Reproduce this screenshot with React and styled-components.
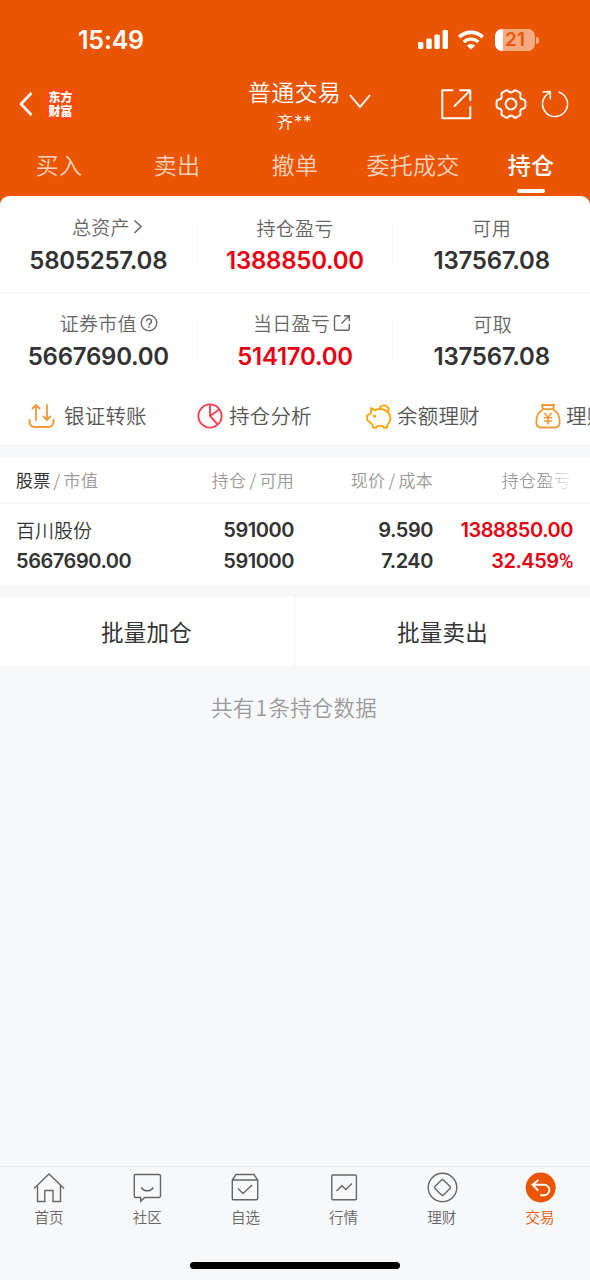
import React from "react";
import styled, { createGlobalStyle } from "styled-components";

const ORANGE = "#ea5504";
const RED = "#e60012";

const summary = [
  [
    { label: "总资产", value: "5805257.08", icon: "chevron", shift: 18 },
    { label: "持仓盈亏", value: "1388850.00", red: true },
    { label: "可用", value: "137567.08" },
  ],
  [
    { label: "证券市值", value: "5667690.00", icon: "help", shift: 21 },
    { label: "当日盈亏", value: "514170.00", icon: "share", red: true, shift: 14 },
    { label: "可取", value: "137567.08", shift: 2 },
  ],
];

const menus = ["买入", "卖出", "撤单", "委托成交", "持仓"];

function SignalIcon() {
  return (
    <svg width="31" height="20" viewBox="0 0 31 20" fill="#fff">
      <rect x="0" y="12" width="5.4" height="7" rx="1.4" />
      <rect x="8.3" y="8.6" width="5.4" height="10.4" rx="1.4" />
      <rect x="16.4" y="4.4" width="5.4" height="14.6" rx="1.4" />
      <rect x="24.6" y="0" width="5.4" height="19" rx="1.4" />
    </svg>
  );
}

function WifiIcon() {
  return (
    <svg width="26" height="20" viewBox="0 0 26 20" fill="none" stroke="#fff" strokeWidth="3.8">
      <path d="M1.300 7.200a16.800 16.800 0 0 1 23.400 0" />
      <path d="M5.700 12a10.600 10.600 0 0 1 14.600 0" strokeWidth="3.400" />
      <path d="M13 19.600l-4.100-3.900a5.800 5.800 0 0 1 8.200 0z" fill="#fff" stroke="none" />
    </svg>
  );
}

function LabelIcon({ type }) {
  if (type === "chevron") {
    return (
      <svg width="10" height="18" viewBox="0 0 10 18" fill="none" stroke="#666" strokeWidth="1.5">
        <path d="M1.500 2.500l6.500 6-6.500 6.500" />
      </svg>
    );
  }
  if (type === "help") {
    return (
      <svg width="18" height="18" viewBox="0 0 18 18" fill="none" stroke="#666" strokeWidth="1.3">
        <circle cx="9" cy="9" r="7.8" />
        <path d="M6.600 7.300a2.400 2.400 0 1 1 3.700 2C9.400 9.900 9 10.300 9 11.200" strokeWidth="1.500" />
        <path d="M9 12.300v1.500" strokeWidth="1.600" />
      </svg>
    );
  }
  return (
    <svg width="18" height="18" viewBox="0 0 18 18" fill="none" stroke="#666" strokeWidth="1.4">
      <path d="M7.500 1.800H3a1.500 1.500 0 0 0-1.500 1.500v11.500a1.500 1.500 0 0 0 1.500 1.500h11.800a1.500 1.500 0 0 0 1.500-1.500V10" />
      <path d="M8.500 9.600L16 2M11 1.700h5.300V7" />
    </svg>
  );
}

function Header() {
  return (
    <StHeader>
      <StStatus>
        <StTime>15:49</StTime>
        <StStatusIcons>
          <SignalIcon />
          <WifiIcon />
          <StBattery>
            <StBatteryBody>21</StBatteryBody>
            <StBatteryTip />
          </StBattery>
        </StStatusIcons>
      </StStatus>
      <StNav>
        <StNavLeft>
          <svg width="14" height="24" viewBox="0 0 14 24" fill="none" stroke="#fff" strokeWidth="2.6">
            <path d="M12.500 1L2 12l10.500 11" strokeLinejoin="round" />
          </svg>
          <StLogo>
            <span>东方</span>
            <span>财富</span>
          </StLogo>
        </StNavLeft>
        <StAccount>
          <StAccountTitle>普通交易</StAccountTitle>
          <StAccountName>
            齐<span>**</span>
          </StAccountName>
        </StAccount>
        <StArrow width="22" height="15" viewBox="0 0 22 15">
          <path d="M1 1l10 12L21 1" />
        </StArrow>
        <StNavRight>
          <svg width="32" height="32" viewBox="0 0 32 32" fill="none" stroke="#fff" strokeWidth="1.900">
            <path d="M12.500 2.300H2.300v28h28V19" strokeLinejoin="round" strokeLinecap="round" />
            <path d="M14.500 18L30 2.600M20 2.300h10.300v10" strokeLinejoin="round" strokeLinecap="round" />
          </svg>
          <svg width="32" height="32" viewBox="0 0 32 32" fill="none" stroke="#fff" strokeWidth="2">
            <path
              d="M10.800 2.600Q12 1.700 13.100 3Q16 5.800 18.900 3Q20 1.700 21.200 2.600L24.800 4.600Q26 5.400 25.400 6.900Q24.500 10.700 28.200 11.600Q30.300 12 30.400 13.600V18.400Q30.300 20 28.200 20.400Q24.500 21.300 25.400 25.100Q26 26.600 24.800 27.400L21.200 29.400Q20 30.300 18.900 29Q16 26.200 13.100 29Q12 30.300 10.800 29.400L7.200 27.400Q6 26.600 6.600 25.100Q7.500 21.300 3.800 20.400Q1.700 20 1.600 18.400V13.600Q1.700 12 3.800 11.600Q7.500 10.700 6.600 6.900Q6 5.400 7.200 4.600Z"
              strokeLinejoin="round"
            />
            <circle cx="16" cy="16" r="5.400" />
          </svg>
          <svg width="28" height="28" viewBox="0 0 28 28" fill="none" stroke="#fff" strokeWidth="1.500">
            <path d="M17.500 2A12.500 12.500 0 1 1 8.500 2.800" />
            <path d="M1.500 2L9.300 1.500V9.500" />
          </svg>
        </StNavRight>
      </StNav>
      <StMenus>
        {menus.map((menu) => (
          <StMenu key={menu} $active={menu === "持仓"}>
            {menu}
          </StMenu>
        ))}
      </StMenus>
    </StHeader>
  );
}

function Summary() {
  return (
    <StSummary>
      {summary.map((row, i) => (
        <StSummaryRow key={i} $line={i === 0}>
          {row.map((item) => (
            <StSummaryCell key={item.label}>
              <StLabel $shift={item.shift} $low={!item.icon}>
                {item.label}
                {item.icon && <LabelIcon type={item.icon} />}
              </StLabel>
              <StValue $red={item.red}>{item.value}</StValue>
            </StSummaryCell>
          ))}
        </StSummaryRow>
      ))}
    </StSummary>
  );
}

function QuickLinks() {
  return (
    <StLinks>
      <StLink $gap={9}>
        <svg width="27" height="26" viewBox="0 0 27 26" fill="none" stroke="#f09a37" strokeWidth="2" strokeLinecap="round" strokeLinejoin="round">
          <path d="M1.500 17v2a5 5 0 0 0 5 5h14a5 5 0 0 0 5-5v-2" />
          <path d="M8 17V2M4.500 5.500L8 2l3.500 3.500M19 2v15M15.500 13.500L19 17l3.500-3.500" strokeWidth="1.800" />
        </svg>
        银证转账
      </StLink>
      <StLink $gap={6}>
        <svg width="26" height="26" viewBox="0 0 26 26" fill="none" stroke="#f5424f" strokeWidth="1.900">
          <circle cx="13" cy="13" r="11.600" />
          <path d="M13 1.400V13l7.800 8.500M13 13l9.500-6.700" />
        </svg>
        持仓分析
      </StLink>
      <StLink $gap={5}>
        <svg width="26" height="26" viewBox="0 0 26 26" fill="none" stroke="#f5a70c" strokeWidth="1.900" strokeLinejoin="round">
          <path d="M5 5.200l4 2.200C11.500 6 16 5.800 19.500 7.300c4.800 2.500 6.300 8.500 3.400 12.500-.8 1.200-1.500 1.500-1.500 2.600 0 1.800-.8 2.400-2.100 2.400h-1.500l-1.400-1.900h-4.800l-1.500 1.900H8.300c-1 0-1.600-.8-1.600-2.100 0-1.200-1-2-1.800-2.700L1.100 17v-4.500L4 11c.8-1 .9-1.300 1.100-2.100z" />
          <path d="M13.600 5.500a4.600 4.600 0 1 1 8.700 3" />
          <circle cx="8.700" cy="13.200" r=".7" fill="#f5a70c" />
        </svg>
        余额理财
      </StLink>
      <StLink $gap={5}>
        <svg width="26" height="26" viewBox="0 0 26 26" fill="none" stroke="#f09a37" strokeWidth="1.800" strokeLinejoin="round">
          <path d="M8.200 6.200L6.800 2h12.400l-1.400 4.200zM8.200 6.200C3.500 8.800 1.300 13 1.300 18.500c0 4 1.400 6 4.700 6h14c3.300 0 4.700-2 4.700-6 0-5.500-2.200-9.700-6.900-12.300" />
          <path d="M9.500 10l3.500 4.500 3.500-4.500M13 14.500v7M8.800 14.800h8.400M8.800 18h8.400" strokeWidth="1.600" />
        </svg>
        理财
      </StLink>
    </StLinks>
  );
}

function Holdings() {
  return (
    <StHoldings>
      <StTableHead>
        <div>
          <b>股票</b>
          <i>/</i>市值
        </div>
        <div>
          持仓<i>/</i>可用
        </div>
        <div>
          现价<i>/</i>成本
        </div>
        <StFade>持仓盈亏</StFade>
      </StTableHead>
      <StTableRow>
        <StStock>百川股份</StStock>
        <div>591000</div>
        <div>9.590</div>
        <StProfit>1388850.00</StProfit>
        <div>5667690.00</div>
        <div>591000</div>
        <div>7.240</div>
        <StProfit>
          32.459<StPercent>%</StPercent>
        </StProfit>
      </StTableRow>
    </StHoldings>
  );
}

const footerItems = [
  {
    name: "首页",
    icon: <path d="M1 16.500L16 2l15 14.500M4.500 14v15.500h7.300V18.500h8.200v11h7.500V14" />,
  },
  {
    name: "社区",
    icon: (
      <>
        <path d="M4 2.500h24a1.500 1.500 0 0 1 1.500 1.500v20a1.500 1.500 0 0 1-1.500 1.500H13.700l-4 3.800v-3.800H4.800A1.500 1.500 0 0 1 3.300 24V3.200z" />
        <path d="M10.200 15.500c2.800 4.400 9.400 4.400 12.200 0" />
      </>
    ),
  },
  {
    name: "自选",
    icon: (
      <>
        <path d="M3.300 8L7 2.500h18L28.700 8v18.500a1.300 1.300 0 0 1-1.300 1.300H4.600a1.300 1.300 0 0 1-1.300-1.300zM3.300 8h25.400" />
        <path d="M9 16.500l5 5 9-8.500" />
      </>
    ),
  },
  {
    name: "行情",
    icon: (
      <>
        <rect x="3.800" y="3" width="24.600" height="24.800" rx="1" />
        <path d="M8.500 19l5.300-5.200 4 3.700L24 11.500" />
      </>
    ),
  },
  {
    name: "理财",
    icon: (
      <>
        <circle cx="16.500" cy="15.500" r="14.300" />
        <path d="M15.500 8.100q1-1 2 0l6.500 6.500q1 .9 0 1.800l-6.500 6.500q-1 1-2 0l-6.500-6.500q-1-.9 0-1.800z" />
      </>
    ),
  },
  {
    name: "交易",
    active: true,
    icon: (
      <>
        <circle cx="16.700" cy="15.500" r="15" fill={ORANGE} stroke="none" />
        <path d="M14.500 8L8.500 12.800l5.700 5.700M8.500 12.800h11.700a5.200 5.200 0 0 1 0 10.400h-4" stroke="#fff" strokeWidth="1.900" />
      </>
    ),
  },
];

function Footer() {
  return (
    <StFooter>
      <StFooterList>
        {footerItems.map((item) => (
          <StFooterItem key={item.name} $active={item.active}>
            <svg width="32" height="32" viewBox="0 0 32 32" fill="none" stroke="#666" strokeWidth="1.400">
              {item.icon}
            </svg>
            {item.name}
          </StFooterItem>
        ))}
      </StFooterList>
      <StHomeBar />
    </StFooter>
  );
}

function App() {
  return (
    <StWrap>
      <GlobalStyle />
      <Header />
      <StTop>
        <Summary />
        <QuickLinks />
      </StTop>
      <Holdings />
      <StButtons>
        <StButton>批量加仓</StButton>
        <StButton>批量卖出</StButton>
      </StButtons>
      <StCount>
        共有<span>1</span>条持仓数据
      </StCount>
      <Footer />
    </StWrap>
  );
}

export default App;

const GlobalStyle = createGlobalStyle`
  * {
    box-sizing: border-box;
  }
  body {
    margin: 0;
  }
  svg {
    flex: none;
    display: block;
  }
`;

const StWrap = styled.div`
  width: 590px;
  height: 1280px;
  overflow: hidden;
  display: flex;
  flex-direction: column;
  background-color: #f7f8fa;
  color: #333;
  font-family: "Noto Sans CJK SC", sans-serif;
  font-weight: 350;
`;

const StHeader = styled.div`
  height: 206px;
  flex: none;
  background-color: ${ORANGE};
  color: white;
`;

const StStatus = styled.div`
  height: 80px;
  padding: 0 51px 0 78px;
  display: flex;
  justify-content: space-between;
  align-items: center;
  font-family: Inter, sans-serif;
`;

const StTime = styled.div`
  font-size: 25px;
  font-weight: 600;
  letter-spacing: -0.2px;
`;

const StStatusIcons = styled.div`
  display: flex;
  align-items: center;
  gap: 9px;
`;

const StBattery = styled.div`
  display: flex;
  align-items: center;
  gap: 1px;
  margin-left: 2px;
`;

const StBatteryBody = styled.div`
  width: 40px;
  height: 22px;
  border-radius: 7px;
  background: linear-gradient(90deg, white 8px, #f6aa82 8px);
  color: ${ORANGE};
  font-size: 19px;
  font-weight: 600;
  line-height: 22px;
  text-align: center;
`;

const StBatteryTip = styled.div`
  width: 3px;
  height: 7px;
  border-radius: 0 3px 3px 0;
  background-color: #f6aa82;
`;

const StNav = styled.div`
  height: 60px;
  padding: 0 21px 0 19px;
  display: flex;
`;

const StNavLeft = styled.div`
  width: 229px;
  height: 48px;
  display: flex;
  align-items: center;
  gap: 12px;
`;

const StLogo = styled.div`
  width: 31px;
  height: 31px;
  border-radius: 5px;
  background-color: #ff4a0c;
  display: flex;
  flex-direction: column;
  align-items: center;
  justify-content: center;
  font-size: 12px;
  font-weight: 900;
  line-height: 14px;
`;

const StAccount = styled.div`
  width: 93px;
  display: flex;
  flex-direction: column;
  align-items: center;
`;

const StAccountTitle = styled.div`
  height: 26px;
  font-size: 23px;
  line-height: 23px;
  letter-spacing: 0.3px;
  white-space: nowrap;
`;

const StAccountName = styled.div`
  font-size: 16px;
  line-height: 30px;
  letter-spacing: 1px;

  span {
    font-family: Inter, sans-serif;
    font-size: 17px;
    line-height: 1;
    letter-spacing: 0.5px;
  }
`;

const StArrow = styled.svg`
  margin: 14px 0 0 8px;
  fill: none;
  stroke: white;
  stroke-width: 1.9;
`;

const StNavRight = styled.div`
  height: 48px;
  margin-left: auto;
  display: flex;
  align-items: center;

  svg:nth-child(2) {
    margin: 0 14px 0 23px;
  }
`;

const StMenus = styled.div`
  height: 56px;
  display: grid;
  grid-template-columns: repeat(5, 1fr);
`;

const StMenu = styled.div`
  display: flex;
  flex-direction: column;
  align-items: center;
  font-size: 23px;
  line-height: 49px;
  letter-spacing: 0.3px;
  color: ${(props) => (props.$active ? "white" : "#fbd3bd")};
  font-weight: ${(props) => (props.$active ? 500 : 350)};

  &::after {
    content: "";
    width: 28px;
    height: 4px;
    border-radius: 2px;
    background-color: ${(props) => (props.$active ? "white" : "transparent")};
  }
`;

const StTop = styled.div`
  height: 248px;
  flex: none;
  margin-top: -10px;
  border-radius: 9px 9px 0 0;
  background-color: white;
`;

const StSummary = styled.div`
  height: 192px;
`;

const StSummaryRow = styled.div`
  height: ${(props) => (props.$line ? 97 : 95)}px;
  padding-top: ${(props) => (props.$line ? 16 : 15)}px;
  border-bottom: ${(props) => (props.$line ? "1px solid #f6f6f6" : "none")};
  display: grid;
  grid-template-columns: repeat(3, 1fr);
`;

const StSummaryCell = styled.div`
  display: flex;
  flex-direction: column;
  align-items: center;
  background: linear-gradient(#f6f6f6, #f6f6f6) right 12px / 1px 40px no-repeat;

  &:last-child {
    background: none;
  }
`;

const StLabel = styled.div`
  height: 31px;
  padding-top: ${(props) => (props.$low ? 1 : 0)}px;
  padding-left: ${(props) => props.$shift || 0}px;
  display: flex;
  align-items: flex-start;
  gap: 3px;
  font-size: 19px;
  line-height: 29px;
  letter-spacing: 0.3px;
  color: #666;

  svg {
    margin-top: 6px;
  }
`;

const StValue = styled.div`
  font-family: Inter, sans-serif;
  font-size: 24px;
  font-weight: 600;
  line-height: 36px;
  letter-spacing: -0.25px;
  color: ${(props) => (props.$red ? RED : "#333")};
`;

const StLinks = styled.div`
  height: 56px;
  padding: 0 0 2px 28px;
  display: flex;
  overflow: hidden;
`;

const StLink = styled.div`
  width: 169px;
  flex: none;
  display: flex;
  align-items: center;
  gap: ${(props) => props.$gap}px;
  font-size: 20.5px;
  line-height: 29px;
  letter-spacing: 0.2px;
  color: #555;
  white-space: nowrap;

  svg {
    margin-top: 2px;
  }
`;

const StHoldings = styled.div`
  height: 128px;
  flex: none;
  margin-top: 13px;
  background-color: white;
`;

const StTableHead = styled.div`
  height: 47px;
  padding: 0 17px 0 16px;
  border-bottom: 1px solid #f2f2f2;
  display: grid;
  grid-template-columns: 148px 130px 139px 140px;
  line-height: 46px;
  font-size: 17px;
  letter-spacing: 0.3px;
  color: #999;
  text-align: right;

  div:first-child {
    text-align: left;
  }
  b {
    color: #333;
    font-weight: 400;
  }
  i {
    margin: 0 3px;
    font-style: normal;
  }
`;

const StFade = styled.div`
  padding-right: 2px;
  background: linear-gradient(90deg, #999 78%, #eee 98%);
  background-clip: text;
  color: transparent;
`;

const StTableRow = styled.div`
  height: 81px;
  padding: 11px 17px 0 16px;
  display: grid;
  grid-template-columns: 148px 130px 139px 140px;
  grid-auto-rows: 31px;
  line-height: 31px;
  font-family: Inter, sans-serif;
  font-size: 20px;
  font-weight: 600;
  letter-spacing: -0.45px;
  text-align: right;

  div:nth-child(4n + 1) {
    text-align: left;
  }
`;

const StStock = styled.div`
  font-family: "Noto Sans CJK SC", sans-serif;
  font-size: 19px;
  font-weight: 350;
  line-height: 30px;
  letter-spacing: 0;
`;

const StProfit = styled.div`
  color: ${RED};
`;

const StPercent = styled.span`
  font-family: Roboto, sans-serif;
  font-weight: 500;
  line-height: 1;
`;

const StButtons = styled.div`
  height: 69px;
  flex: none;
  margin-top: 12px;
  display: grid;
  grid-template-columns: 294px 294px;
  gap: 2px;
`;

const StButton = styled.button`
  border: none;
  padding: 0 1px 2px 0;
  background-color: white;
  color: #333;
  font-family: inherit;
  font-size: 22.5px;
  font-weight: 400;
  letter-spacing: 0.3px;
`;

const StCount = styled.div`
  margin-top: 26px;
  padding-right: 2px;
  line-height: 30px;
  font-size: 21.5px;
  letter-spacing: 0.2px;
  color: #999;
  text-align: center;

  span {
    margin: 0 1px;
  }
`;

const StFooter = styled.div`
  height: 114px;
  flex: none;
  margin-top: auto;
  border-top: 1px solid #e9eaed;
  display: flex;
  flex-direction: column;
  align-items: center;
`;

const StFooterList = styled.div`
  width: 100%;
  height: 95px;
  padding: 5px 1px 0 0;
  display: grid;
  grid-template-columns: repeat(6, 1fr);
`;

const StFooterItem = styled.div`
  display: flex;
  flex-direction: column;
  align-items: center;
  font-size: 14.5px;
  line-height: 25px;
  color: ${(props) => (props.$active ? ORANGE : "#666")};
`;

const StHomeBar = styled.div`
  width: 210px;
  height: 7px;
  border-radius: 4px;
  background-color: black;
`;
